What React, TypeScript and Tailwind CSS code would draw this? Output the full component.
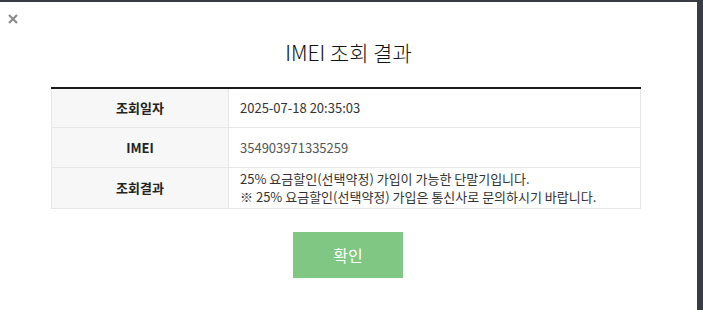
import React from "react";

const font = { fontFamily: '"Noto Sans CJK KR", "Noto Sans", sans-serif' };

export default function App() {
  return (
    <div className="w-[703px] h-[310px] bg-[#3a3c43] flex flex-col overflow-hidden" style={font}>
      <div className="h-[2px] shrink-0" />
      <div className="flex flex-1">
        <div className="w-[697px] bg-white flex flex-col relative">
          <button className="absolute left-[8px] top-[12px] text-[#8c8c8c]">
            <svg width="10" height="10" viewBox="0 0 10 10">
              <path d="M1 1 L9 9 M9 1 L1 9" stroke="currentColor" strokeWidth="2.2" strokeLinecap="butt" />
            </svg>
          </button>
          <h1 className="mt-[36px] text-center text-[21px] leading-[28px] text-[#111] font-light">IMEI 조회 결과</h1>
          <div className="mt-[21px] ml-[51px] w-[590px] border-t-2 border-[#1a1a1a]">
            <div className="grid grid-cols-[177px_1fr] border-x border-b border-[#e6e6e6] text-[13px] text-[#333]">
              <div className="h-[39px] bg-[#f7f7f7] border-r border-b border-[#e6e6e6] flex items-center justify-center font-bold text-[#222]">조회일자</div>
              <div className="h-[39px] border-b border-[#e6e6e6] flex items-center pl-[11px]">2025-07-18 20:35:03</div>
              <div className="h-[40px] bg-[#f7f7f7] border-r border-b border-[#e6e6e6] flex items-center justify-center font-bold text-[#222]">IMEI</div>
              <div className="h-[40px] border-b border-[#e6e6e6] flex items-center pl-[11px] text-[#555]">354903971335259</div>
              <div className="h-[40px] bg-[#f7f7f7] border-r border-[#e6e6e6] flex items-center justify-center font-bold text-[#222]">조회결과</div>
              <div className="h-[40px] flex flex-col justify-center pl-[11px] leading-[18px]">
                <div>25% 요금할인(선택약정) 가입이 가능한 단말기입니다.</div>
                <div>※ 25% 요금할인(선택약정) 가입은 통신사로 문의하시기 바랍니다.</div>
              </div>
            </div>
          </div>
          <div className="flex justify-center mt-[23px]">
            <button className="w-[110px] h-[46px] bg-[#80c783] text-white text-[16px] ml-[-1px]">확인</button>
          </div>
        </div>
      </div>
    </div>
  );
}
